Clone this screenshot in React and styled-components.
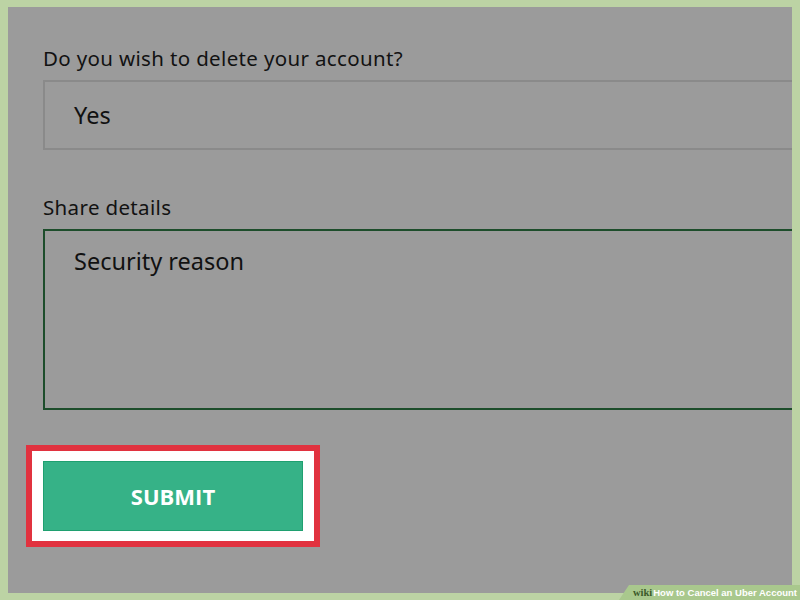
import React from "react";
import styled, { createGlobalStyle } from "styled-components";

const GlobalStyle = createGlobalStyle`
  html, body {
    margin: 0;
    padding: 0;
    background: #bcd3a4;
  }
  body {
    width: 800px;
    height: 600px;
    overflow: hidden;
    font-family: "Noto Sans", "Open Sans", sans-serif;
  }
`

const Frame = styled.div`
  position: relative;
  width: 800px;
  height: 600px;
  padding: 7px 8px;
  box-sizing: border-box;
`

const Panel = styled.main`
  background: #9b9b9b;
  height: 100%;
  display: flex;
  flex-direction: column;
  padding: 38px 0 0 35px;
  box-sizing: border-box;
`

const Field = styled.section`
  display: flex;
  flex-direction: column;
  margin-bottom: ${props => props.gap || 0}px;
`

const Label = styled.label`
  font-size: 20.5px;
  line-height: 26px;
  color: #121212;
  letter-spacing: 0.35px;
  margin-bottom: 9px;
`

const SelectBox = styled.div`
  height: 70px;
  border: 2px solid #8a8a8a;
  border-right: none;
  box-sizing: border-box;
  display: flex;
  align-items: center;
  padding-left: 29px;
  font-size: 23.5px;
  color: #111;
`

const TextBox = styled.div`
  height: 181px;
  border: 2px solid #1d4d2b;
  border-right: none;
  box-sizing: border-box;
  padding: 14px 0 0 29px;
  font-size: 23.5px;
  color: #111;
`

const Highlight = styled.div`
  align-self: flex-start;
  margin-left: -17px;
  border: 6px solid #e1323f;
  background: #ffffff;
  padding: 10px 11px 10px 11px;
`

const SubmitButton = styled.button`
  width: 260px;
  height: 70px;
  background: #36b287;
  border: 1px solid #1fa070;
  color: #ffffff;
  font-family: "Open Sans", "Noto Sans", sans-serif;
  font-weight: 700;
  font-size: 22px;
  letter-spacing: 0;
  cursor: pointer;
`

const Watermark = styled.div`
  position: absolute;
  right: 0;
  bottom: 0;
  height: 15px;
  padding: 0 3px 0 14px;
  background: #a9c88d;
  clip-path: polygon(10px 0, 100% 0, 100% 100%, 0 100%);
  display: flex;
  align-items: center;
  font-family: "Liberation Sans", Arial, sans-serif;
  font-size: 9.5px;
  font-weight: 700;
  color: #ffffff;
`

const WikiWord = styled.span`
  font-family: "Liberation Serif", serif;
  font-size: 10.5px;
  color: #3c5a2a;
  margin-right: 1px;
`

const App = () => {
  return (
    <React.Fragment>
      <GlobalStyle />
      <Frame>
        <Panel>
          <Field gap={44}>
            <Label>Do you wish to delete your account?</Label>
            <SelectBox>Yes</SelectBox>
          </Field>
          <Field gap={35}>
            <Label>Share details</Label>
            <TextBox>Security reason</TextBox>
          </Field>
          <Highlight>
            <SubmitButton>SUBMIT</SubmitButton>
          </Highlight>
        </Panel>
        <Watermark><WikiWord>wiki</WikiWord>How to Cancel an Uber Account</Watermark>
      </Frame>
    </React.Fragment>
  );
}

export default App;
